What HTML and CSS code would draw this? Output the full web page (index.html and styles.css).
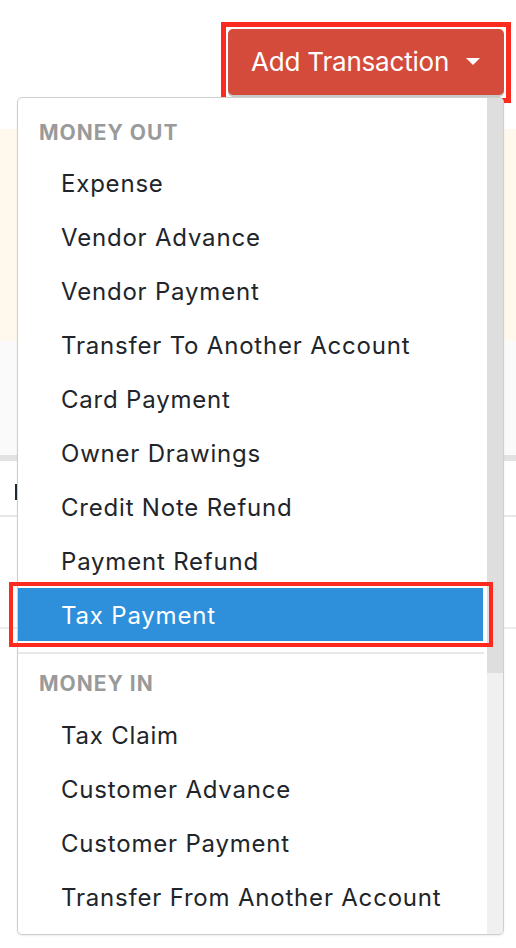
FILE: index.html
```html
<!DOCTYPE html>
<html lang="en">
<head>
<meta charset="utf-8">
<title>Add Transaction</title>
<link rel="stylesheet" href="styles.css">
</head>
<body>
<div class="page">
  <header class="toolbar">
    <div class="btn-wrap">
      <button class="add-btn" type="button">Add Transaction <span class="caret"></span></button>
      <div class="annot annot-btn"></div>
    </div>
  </header>
  <div class="notice"></div>
  <div class="filters"></div>
  <div class="table-head"><span class="head-mark"></span></div>
  <div class="table-row"></div>

  <div class="menu">
    <div class="menu-list">
      <div class="group">
        <div class="group-title">MONEY OUT</div>
        <div class="item">Expense</div>
        <div class="item">Vendor Advance</div>
        <div class="item">Vendor Payment</div>
        <div class="item">Transfer To Another Account</div>
        <div class="item">Card Payment</div>
        <div class="item">Owner Drawings</div>
        <div class="item">Credit Note Refund</div>
        <div class="item">Payment Refund</div>
        <div class="item active">Tax Payment</div>
      </div>
      <div class="group group-in">
        <div class="group-title">MONEY IN</div>
        <div class="item">Tax Claim</div>
        <div class="item">Customer Advance</div>
        <div class="item">Customer Payment</div>
        <div class="item">Transfer From Another Account</div>
      </div>
    </div>
    <div class="scrollbar"><div class="thumb"></div></div>
  </div>
  <div class="annot annot-item"></div>
</div>
</body>
</html>
```
FILE: styles.css
```css
* { box-sizing: border-box; }
html, body { margin: 0; padding: 0; background: #fff; }
body {
  font-family: Inter, "Open Sans", "Liberation Sans", sans-serif;
  color: #21252a;
}
.page {
  position: relative;
  width: 516px;
  height: 948px;
  overflow: hidden;
  background: #fff;
}
.toolbar {
  height: 129px;
  display: flex;
  justify-content: flex-end;
  align-items: flex-start;
  padding: 29px 12px 0 0;
}
.btn-wrap { position: relative; }
.add-btn {
  display: flex;
  align-items: center;
  height: 66px;
  width: 276px;
  padding: 0 0 1px 23px;
  border: 0;
  border-radius: 5px;
  background: #d44b3b;
  color: #fff;
  font-family: Inter, "Open Sans", sans-serif;
  font-size: 26px;
  font-weight: 400;
  letter-spacing: -0.2px;
  box-shadow: 0 2px 0 #c9c9c9;
}
.caret {
  margin-left: 17px;
  width: 0;
  height: 0;
  border-left: 7px solid transparent;
  border-right: 7px solid transparent;
  border-top: 7px solid #fff;
}
.annot {
  position: absolute;
  border-style: solid;
  border-color: #fd2a1f;
  pointer-events: none;
}
.annot-btn {
  left: -7px;
  top: -7px;
  width: 290px;
  height: 81px;
  border-width: 5px;
}
.notice {
  height: 212px;
  background: #fef8ed;
}
.filters {
  height: 120px;
  background: #fafafa;
  border-bottom: 6px solid #e2e2e2;
}
.table-head {
  height: 56px;
  border-bottom: 2px solid #e8e8e8;
  padding: 23px 0 0 15px;
}
.head-mark {
  display: block;
  width: 3px;
  height: 16px;
  background: #1e2b33;
}
.table-row {
  height: 112px;
  border-bottom: 2px solid #ececec;
}
.menu {
  position: absolute;
  left: 17px;
  top: 97px;
  width: 487px;
  height: 838px;
  display: flex;
  background: #fff;
  border: 1px solid #cfcfcf;
  border-radius: 5px;
  overflow: hidden;
  box-shadow: 0 1px 2px rgba(0,0,0,0.08);
}
.menu-list {
  flex: 1;
  padding-right: 2px;
}
.group-title {
  padding: 21px 0 9px 21px;
  line-height: 28px;
  font-size: 21px;
  font-weight: 700;
  color: #9a9a9a;
  letter-spacing: 1px;
}
.group-in {
  margin-top: 10px;
  border-top: 2px solid #e8e8e8;
}
.group-in .group-title { padding-top: 16px; padding-bottom: 10px; }
.item {
  height: 54px;
  line-height: 56px;
  overflow: hidden;
  padding-left: 43px;
  font-size: 24px;
  letter-spacing: 0.8px;
  color: #21252a;
  white-space: nowrap;
}
.item.active {
  background: #2e8fdb;
  color: #fff;
  box-shadow: inset -1px -1px 0 #fff;
}
.scrollbar {
  width: 17px;
  background: #f0f0f0;
  border-left: 1px solid #fff;
  display: flex;
  flex-direction: column;
}
.thumb {
  height: 575px;
  background: #dedede;
}
.annot-item {
  left: 9px;
  top: 582px;
  width: 484px;
  height: 65px;
  border-width: 4px;
}
```
